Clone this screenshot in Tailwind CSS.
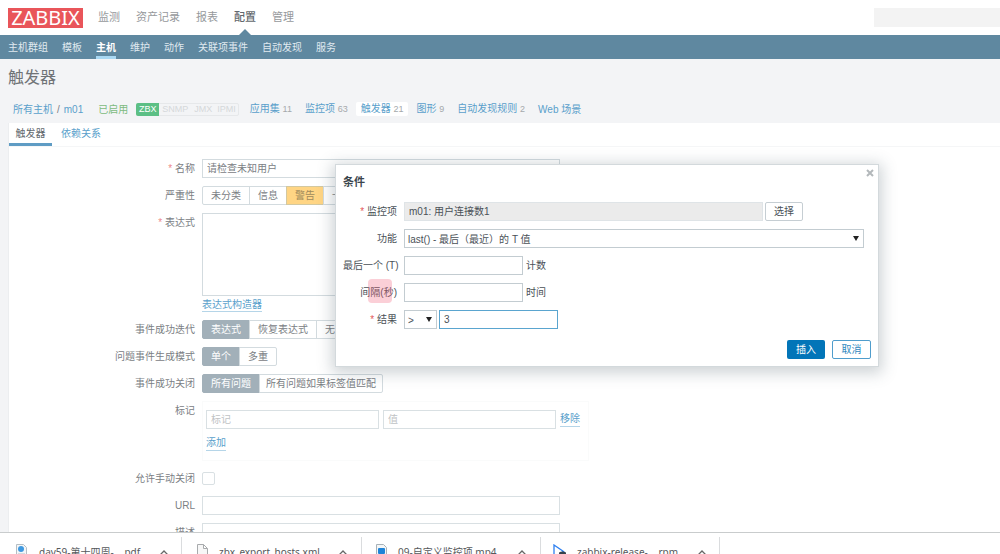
<!DOCTYPE html>
<html lang="zh-CN">
<head>
    <meta charset="UTF-8">
    <meta name="viewport" content="width=device-width, initial-scale=1.0">
    <title>触发器 - Zabbix</title>
    <script src="https://cdn.jsdelivr.net/npm/@tailwindcss/browser@4"></script>
    <style>
        body { font-family: 'Liberation Sans', 'Noto Sans CJK SC', sans-serif; }
        .logo, .downloads { font-family: 'Noto Sans', 'Noto Sans CJK SC', sans-serif; }
    </style>
</head>
<body class="relative flex h-screen flex-col overflow-hidden bg-[#f3f4f6] text-[10px] leading-[19px] text-[#7b8084]">

    <!-- Top menu -->
    <header class="flex h-[35px] shrink-0 items-center bg-white pl-2 text-[11px]">
        <a href="#" class="logo flex h-5 w-[75px] items-center justify-center bg-[#e9555a] text-[20px] leading-none text-white">ZABBIX</a>
        <nav class="ml-[15px] flex h-full items-center gap-4 text-[#96999c]">
            <a href="#">监测</a>
            <a href="#">资产记录</a>
            <a href="#">报表</a>
            <a href="#" class="relative flex h-full items-center font-medium text-[#62686d]">配置
                <svg class="absolute bottom-0 left-[5px] h-[6px] w-3" viewBox="0 0 12 6"><path d="M0 6L6 0l6 6z" fill="#5f88a0"/></svg>
            </a>
            <a href="#">管理</a>
        </nav>
        <input type="search" aria-label="搜索" class="ml-auto h-[19px] w-[126px] bg-[#f3f3f3]">
    </header>

    <!-- Sub menu -->
    <nav class="flex h-6 shrink-0 items-center gap-[14px] bg-[#5f88a0] pl-2 text-[#e0eaf0]">
        <a href="#">主机群组</a>
        <a href="#">模板</a>
        <a href="#" class="flex h-[23px] items-center border-b-[3px] border-[#a9d8f3] pt-[3px] font-bold text-white">主机</a>
        <a href="#">维护</a>
        <a href="#">动作</a>
        <a href="#">关联项事件</a>
        <a href="#">自动发现</a>
        <a href="#">服务</a>
    </nav>

    <main class="flex min-h-0 flex-1 flex-col overflow-hidden">
        <h1 class="flex h-9 shrink-0 items-center pl-2 text-[16px] text-[#6f7376]">触发器</h1>

        <div class="flex h-7 shrink-0 items-center pl-[13px] text-[#5a9fcb]">
            <a href="#">所有主机</a>
            <span class="mx-1 text-[#7b8084]">/</span>
            <a href="#">m01</a>
            <span class="ml-[15px] text-[#7dbb80]">已启用</span>
            <div class="ml-2 flex h-[13px] items-center rounded-xs border border-[#e6e8ea] text-[9px] leading-none text-[#d5d8da]">
                <span class="-my-px -ml-px flex h-[13px] w-[23px] items-center justify-center rounded-l-xs bg-[#5cbf85] text-white">ZBX</span>
                <span class="px-[3px]">SNMP</span>
                <span class="px-[3px]">JMX</span>
                <span class="px-[2px]">IPMI</span>
            </div>
            <nav class="ml-[6px] flex items-center gap-[3px]">
                <a href="#" class="px-[5px]">应用集 <span class="text-[9px] text-[#a5a9ac]">11</span></a>
                <a href="#" class="px-[5px]">监控项 <span class="text-[9px] text-[#a5a9ac]">63</span></a>
                <a href="#" class="rounded-xs bg-white px-[5px] leading-[14px]">触发器 <span class="text-[9px] text-[#a5a9ac]">21</span></a>
                <a href="#" class="px-[5px]">图形 <span class="text-[9px] text-[#a5a9ac]">9</span></a>
                <a href="#" class="px-[5px]">自动发现规则 <span class="text-[9px] text-[#a5a9ac]">2</span></a>
                <a href="#" class="px-[5px]">Web 场景</a>
            </nav>
        </div>

        <section class="ml-2 min-h-0 flex-1 border-l border-[#eceef0] bg-white">
            <div class="flex h-6 border-b border-[#f5f6f7]">
                <button type="button" class="w-[43px] border-b-[3px] border-[#5f9cc4] pt-px text-center text-[#62686d]">触发器</button>
                <button type="button" class="px-[9px] pt-px pb-[3px] text-[#5a9fcb]">依赖关系</button>
            </div>

            <!-- Trigger form -->
            <form class="mt-3 grid grid-cols-[186px_1fr] gap-x-[7px] gap-y-2">
                <label for="name" class="text-right"><span class="text-[#ee8a8a]">*</span> 名称</label>
                <input id="name" type="text" value="请检查未知用户" class="h-[19px] w-[358px] border border-[#d3dbdf] px-1">

                <span class="text-right">严重性</span>
                <div class="flex" role="radiogroup" aria-label="严重性">
                    <label class="flex h-[19px] items-center rounded-l-xs border border-[#d3dbdf] px-2"><input type="radio" name="severity" class="sr-only">未分类</label>
                    <label class="-ml-px flex h-[19px] items-center border border-[#d3dbdf] px-2"><input type="radio" name="severity" class="sr-only">信息</label>
                    <label class="-ml-px flex h-[19px] items-center border border-[#d3c8a0] bg-[#ffd584] px-2 text-[#a08a5c]"><input type="radio" name="severity" class="sr-only" checked>警告</label>
                    <label class="-ml-px flex h-[19px] items-center border border-[#d3dbdf] px-2"><input type="radio" name="severity" class="sr-only">一般严重</label>
                    <label class="-ml-px flex h-[19px] items-center border border-[#d3dbdf] px-2"><input type="radio" name="severity" class="sr-only">严重</label>
                    <label class="-ml-px flex h-[19px] items-center rounded-r-xs border border-[#d3dbdf] px-2"><input type="radio" name="severity" class="sr-only">灾难</label>
                </div>

                <label for="expression" class="text-right"><span class="text-[#ee8a8a]">*</span> 表达式</label>
                <div class="flex h-[99px] flex-col items-start justify-between">
                    <textarea id="expression" class="h-[83px] w-[358px] resize-none border border-[#d3dbdf]"></textarea>
                    <a href="#" class="border-b border-[#b5d5e8] leading-3 text-[#5a9fcb]">表达式构造器</a>
                </div>

                <span class="text-right">事件成功迭代</span>
                <div class="flex" role="radiogroup" aria-label="事件成功迭代">
                    <label class="flex h-[19px] items-center rounded-l-xs border border-[#d3dbdf] px-2 has-checked:border-[#a2b0b9] has-checked:bg-[#a2b0b9] has-checked:text-white"><input type="radio" name="recovery" class="sr-only" checked>表达式</label>
                    <label class="-ml-px flex h-[19px] items-center border border-[#d3dbdf] px-2"><input type="radio" name="recovery" class="sr-only">恢复表达式</label>
                    <label class="-ml-px flex h-[19px] items-center rounded-r-xs border border-[#d3dbdf] px-2"><input type="radio" name="recovery" class="sr-only">无</label>
                </div>

                <span class="text-right">问题事件生成模式</span>
                <div class="flex" role="radiogroup" aria-label="问题事件生成模式">
                    <label class="flex h-[19px] items-center rounded-l-xs border border-[#d3dbdf] px-2 has-checked:border-[#a2b0b9] has-checked:bg-[#a2b0b9] has-checked:text-white"><input type="radio" name="mode" class="sr-only" checked>单个</label>
                    <label class="-ml-px flex h-[19px] items-center rounded-r-xs border border-[#d3dbdf] px-2"><input type="radio" name="mode" class="sr-only">多重</label>
                </div>

                <span class="text-right">事件成功关闭</span>
                <div class="flex" role="radiogroup" aria-label="事件成功关闭">
                    <label class="flex h-[19px] items-center rounded-l-xs border border-[#d3dbdf] px-2 has-checked:border-[#a2b0b9] has-checked:bg-[#a2b0b9] has-checked:text-white"><input type="radio" name="close" class="sr-only" checked>所有问题</label>
                    <label class="-ml-px flex h-[19px] items-center rounded-r-xs border border-[#d3dbdf] px-[6px]"><input type="radio" name="close" class="sr-only">所有问题如果标签值匹配</label>
                </div>

                <label for="tag" class="text-right">标记</label>
                <div class="h-[60px] w-[387px] border border-[#fafbfb] px-[3px] pt-2">
                    <div class="flex items-center gap-1">
                        <input id="tag" type="text" placeholder="标记" class="h-[19px] w-[173px] border border-[#d9e0e3] px-1 placeholder:text-[#bfc3c5]">
                        <input type="text" aria-label="值" placeholder="值" class="h-[19px] w-[173px] border border-[#d9e0e3] px-1 placeholder:text-[#bfc3c5]">
                        <button type="button" class="border-b border-[#b5d5e8] leading-[14px] text-[#5a9fcb]">移除</button>
                    </div>
                    <button type="button" class="mt-[7px] border-b border-[#b5d5e8] leading-[14px] text-[#5a9fcb]">添加</button>
                </div>

                <label for="manual" class="text-right">允许手动关闭</label>
                <div class="flex items-center"><input id="manual" type="checkbox" class="size-[13px] appearance-none rounded-xs border border-[#d9e0e3]"></div>

                <label for="url" class="text-right">URL</label>
                <input id="url" type="text" class="h-[19px] w-[358px] border border-[#d9e0e3] px-1">

                <label for="description" class="text-right">描述</label>
                <textarea id="description" class="h-20 w-[358px] resize-none border border-[#d9e0e3]"></textarea>
            </form>
        </section>
    </main>

    <!-- Browser download bar -->
    <footer class="downloads flex h-[22px] shrink-0 overflow-hidden border-t border-[#c9cccd] bg-white pt-1 text-[10px] text-[#55585b]">
        <div class="flex h-[30px] w-[182px] items-center border-r border-[#dadcde] pr-[13px] pl-4">
            <svg class="h-4 w-[11px]" viewBox="0 0 11 16"><path d="M.5.5h7l3 3v12H.5z" fill="#f3f6f8" stroke="#b5bec4"/><circle cx="5" cy="5" r="3" fill="#3f99e0"/><path d="M2 10h7M2 12h7" stroke="#b5bec4"/></svg>
            <span class="ml-3">day59-第十四周-....pdf</span>
            <svg class="ml-auto h-[5px] w-2" viewBox="0 0 8 5" fill="none" stroke="#666"><path d="M.5 4.500L4 1l3.500 3.500" stroke-width="1.300"/></svg>
        </div>
        <div class="flex h-[30px] w-[180px] items-center border-r border-[#dadcde] pr-[14px] pl-[15px]">
            <svg class="h-4 w-[11px]" viewBox="0 0 11 16"><path d="M.5.5h6l4 4v11H.5zM6.500.5v4h4" fill="#f7f7f7" stroke="#a8abad"/></svg>
            <span class="ml-[11px]">zbx_export_hosts.xml</span>
            <svg class="ml-auto h-[5px] w-2" viewBox="0 0 8 5" fill="none" stroke="#666"><path d="M.5 4.500L4 1l3.500 3.500" stroke-width="1.300"/></svg>
        </div>
        <div class="flex h-[30px] w-[179px] items-center border-r border-[#dadcde] pr-[14px] pl-[14px]">
            <svg class="h-4 w-[11px]" viewBox="0 0 11 16"><path d="M.5.5h7l3 3v12H.5z" fill="#f3f6f8" stroke="#a8b2b8"/><rect x="2" y="4" width="7" height="6" rx="1" fill="#1f84d8"/></svg>
            <span class="ml-[11px]">09-自定义监控项.mp4</span>
            <svg class="ml-auto h-[5px] w-2" viewBox="0 0 8 5" fill="none" stroke="#666"><path d="M.5 4.500L4 1l3.500 3.500" stroke-width="1.300"/></svg>
        </div>
        <div class="flex h-[30px] w-[179px] items-center border-r border-[#dadcde] pr-[13px] pl-3">
            <svg class="h-4 w-[14px]" viewBox="0 0 14 16"><path d="M1 1l9.500 6.500L1 14z" fill="#fff" stroke="#2d7ff0" stroke-width="1.300"/><path d="M6 8.500c2-1.500 5-1.500 7 0v4H6z" fill="#36424c"/></svg>
            <span class="ml-[10px]">zabbix-release-....rpm</span>
            <svg class="ml-auto h-[5px] w-2" viewBox="0 0 8 5" fill="none" stroke="#666"><path d="M.5 4.500L4 1l3.500 3.500" stroke-width="1.300"/></svg>
        </div>
    </footer>

    <!-- Condition dialog -->
    <div role="dialog" aria-labelledby="dialog-title" class="absolute top-[164px] left-[335px] w-[544px] border border-[#d3d9dc] bg-white pt-2 pr-[7px] pb-[7px] pl-[7px] text-[#4a5157] shadow-[0_3px_14px_3px_rgba(60,80,90,0.25)]">
        <button type="button" aria-label="关闭" class="absolute top-1 right-1 flex size-2">
            <svg class="size-2" viewBox="0 0 8 8"><path d="M1 1l6 6M7 1L1 7" stroke="#b3b8bb" stroke-width="2"/></svg>
        </button>
        <h2 id="dialog-title" class="text-[11px] font-bold text-[#3c464d]">条件</h2>
        <form class="mt-[10px] grid grid-cols-[54px_1fr] gap-x-[7px] gap-y-2">
            <label for="item" class="text-right whitespace-nowrap"><span class="text-[#e45959]">*</span> 监控项</label>
            <div class="flex gap-[2px]">
                <input id="item" type="text" value="m01: 用户连接数1" readonly class="h-[19px] w-[359px] border border-[#dfe4e7] bg-[#ebebeb] px-1">
                <button type="button" class="h-[19px] w-[38px] rounded-xs border border-[#c6ced3] leading-[17px]">选择</button>
            </div>

            <label for="function" class="text-right whitespace-nowrap">功能</label>
            <div class="relative w-[460px]">
                <select id="function" class="block h-[19px] w-full appearance-none border border-[#c3ccd1] px-[3px]">
                    <option>last() - 最后（最近）的 T 值</option>
                </select>
                <svg class="pointer-events-none absolute top-[7px] right-[5px] h-[5px] w-[6px]" viewBox="0 0 6 5"><path d="M0 0h6L3 5z" fill="#222"/></svg>
            </div>

            <label for="last" class="text-right whitespace-nowrap">最后一个 (T)</label>
            <div class="flex gap-[3px]">
                <input id="last" type="text" class="h-[19px] w-[119px] border border-[#c3ccd1] px-1">
                <span>计数</span>
            </div>

            <label for="shift" class="relative text-right whitespace-nowrap">间隔(秒)
                <span class="absolute -top-1 right-[5px] size-6 rounded bg-[#f3607a]/30"></span>
            </label>
            <div class="flex gap-[3px]">
                <input id="shift" type="text" class="h-[19px] w-[119px] border border-[#c3ccd1] px-1">
                <span>时间</span>
            </div>

            <label for="result" class="text-right whitespace-nowrap"><span class="text-[#e45959]">*</span> 结果</label>
            <div class="flex gap-[2px]">
                <div class="relative w-[33px]">
                    <select aria-label="运算符" class="block h-[19px] w-full appearance-none border border-[#c3ccd1] px-[3px]">
                        <option>&gt;</option>
                    </select>
                    <svg class="pointer-events-none absolute top-[7px] right-[5px] h-[5px] w-[6px]" viewBox="0 0 6 5"><path d="M0 0h6L3 5z" fill="#222"/></svg>
                </div>
                <input id="result" type="text" value="3" class="h-[19px] w-[119px] border border-[#5aa5cf] px-1">
            </div>
        </form>
        <div class="mt-[11px] flex justify-end gap-[7px]">
            <button type="button" class="h-[19px] w-[38px] rounded-xs bg-[#0275b8] text-white">插入</button>
            <button type="button" class="h-[19px] w-[39px] rounded-xs border border-[#4f9dcc] leading-[17px] text-[#2f87be]">取消</button>
        </div>
    </div>
</body>
</html>
